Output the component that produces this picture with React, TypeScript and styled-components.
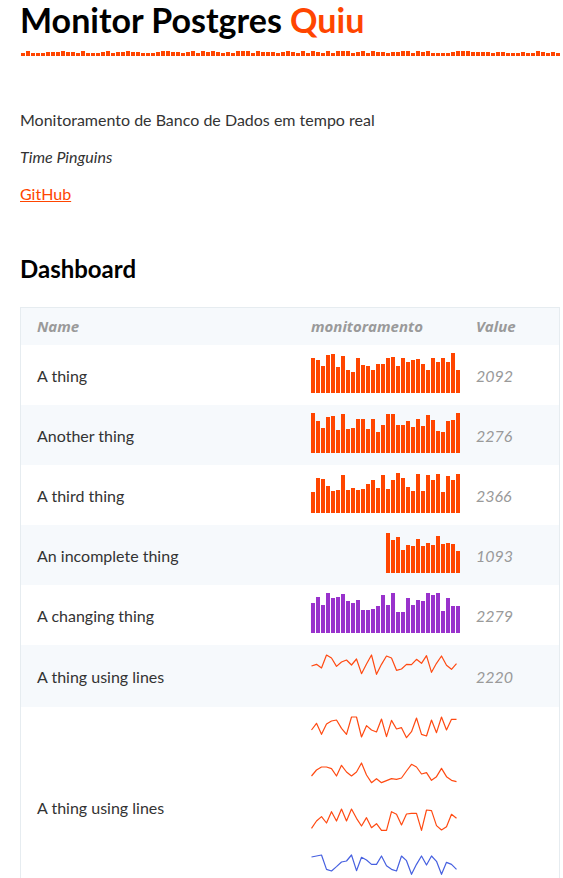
import React from "react";
import styled, { createGlobalStyle } from "styled-components";

const Global = createGlobalStyle`
  html, body { margin: 0; padding: 0; background: #ffffff; }
  body { font-family: Lato, "Open Sans", sans-serif; color: #333333; }
`;

const ORANGE = "#ff4500";

const Page = styled.div`
  width: 540px;
  padding: 0 0 40px 20px;
`;

const Header = styled.header`
  display: flex;
  flex-direction: column;
  gap: 10px;
  margin-bottom: 53px;
`;

const Title = styled.h1`
  margin: 0;
  font-size: 34px;
  line-height: 40px;
  font-weight: 700;
  color: #000000;
`;

const Accent = styled.span`
  color: ${ORANGE};
`;

const Para = styled.p<{ $italic?: boolean }>`
  margin: 0 0 16px;
  font-size: 16px;
  line-height: 21px;
  color: #333333;
  font-style: ${(p) => (p.$italic ? "italic" : "normal")};
`;

const Link = styled.a`
  color: ${ORANGE};
  text-decoration: underline;
`;

const SectionTitle = styled.h2`
  margin: 50px 0 23px;
  font-size: 24px;
  line-height: 30px;
  font-weight: 700;
  color: #000000;
`;

const Frame = styled.div`
  border: 1px solid #e6ecf0;
`;

const Table = styled.table`
  width: 100%;
  border-spacing: 0;
  table-layout: fixed;
`;

const Row = styled.tr<{ $striped?: boolean }>`
  background: ${(p) => (p.$striped ? "#f6f9fc" : "#ffffff")};
`;

const HeadCell = styled.th<{ $chart?: boolean }>`
  padding: ${(p) => (p.$chart ? "8px 0 8px 16px" : "8px 16px")};
  text-align: left;
  font-family: "Open Sans", Lato, sans-serif;
  font-size: 15px;
  line-height: 21px;
  font-weight: 700;
  font-style: italic;
  color: #9a9a9a;
  white-space: nowrap;
`;

const NameCell = styled.td`
  padding: 8px 16px;
  font-size: 16px;
  line-height: 21px;
  color: #333333;
  vertical-align: middle;
`;

const ChartCell = styled.td`
  padding: 8px 0 8px 16px;
  vertical-align: middle;
`;

const ValueCell = styled.td`
  padding: 8px 16px;
  font-size: 16px;
  line-height: 21px;
  font-style: italic;
  color: #9a9a9a;
  vertical-align: middle;
`;

const ChartStack = styled.div`
  display: flex;
  flex-direction: column;
`;

const BarsSvg = styled.svg`
  display: block;
  margin-bottom: 4px;
`;

const LineSvg = styled.svg`
  display: block;
  margin-bottom: 4px;
`;

const DashSvg = styled.svg`
  display: block;
`;

/* header sparkline */
const dashHeights: number[] = (() => {
  const start = [3, 5, 3, 3, 3, 4, 4, 4, 5, 4, 4, 3, 5, 3, 3, 3, 4, 5, 3, 4, 4, 5, 4, 4, 3, 3, 3, 4, 5, 5, 4, 4, 3, 4, 5, 3, 5];
  const out = [...start];
  let seed = 17;
  const choices = [3, 3, 4, 4, 5, 3];
  while (out.length < 108) {
    seed = (seed * 1103515245 + 12345) % 2147483648;
    out.push(choices[seed % choices.length]);
  }
  return out;
})();

const DashLine = () => (
  <DashSvg width={540} height={6} viewBox="0 0 540 6">
    {dashHeights.map((h, i) => (
      <rect key={i} x={i * 5 + 1} y={6 - h} width={4} height={h} fill={ORANGE} />
    ))}
  </DashSvg>
);

const Bars = ({ data, color }: { data: number[]; color: string }) => {
  const offset = 30 - data.length;
  return (
    <BarsSvg width={150} height={40} viewBox="0 0 150 40">
      {data.map((h, i) => (
        <rect key={i} x={(offset + i) * 5} y={40 - h} width={4} height={h} fill={color} />
      ))}
    </BarsSvg>
  );
};

const Line = ({ data, color }: { data: number[]; color: string }) => {
  const min = Math.min(...data);
  const pts = data.map((v, i) => `${i * 5 + 0.5},${(2 + (v - min) / 3).toFixed(2)}`).join(" ");
  return (
    <LineSvg width={150} height={42} viewBox="0 0 150 42">
      <polyline points={pts} fill="none" stroke={color} strokeWidth={1.2} strokeLinejoin="round" />
    </LineSvg>
  );
};

const barsA = [35, 33, 27, 38, 39, 26, 37, 23, 21, 35, 28, 27, 23, 29, 29, 35, 36, 27, 35, 31, 33, 34, 29, 23, 35, 31, 35, 31, 40, 23];
const barsB = [40, 32, 25, 36, 37, 23, 39, 24, 25, 34, 34, 24, 34, 21, 28, 39, 39, 28, 28, 32, 26, 34, 27, 38, 33, 22, 21, 32, 33, 40];
const barsC = [21, 35, 34, 27, 22, 23, 38, 23, 25, 23, 24, 29, 33, 25, 38, 24, 33, 40, 35, 26, 22, 39, 22, 38, 33, 39, 21, 37, 33, 39];
const barsD = [40, 33, 36, 23, 28, 27, 34, 27, 30, 28, 37, 29, 30, 29, 22];
const barsE = [30, 36, 28, 40, 35, 36, 39, 32, 30, 33, 23, 23, 24, 27, 38, 28, 40, 21, 21, 35, 28, 33, 32, 40, 38, 40, 22, 35, 27, 27];

const line1 = [78, 73, 84, 45, 54, 79, 66, 60, 75, 57, 101, 72, 45, 103, 73, 48, 54, 91, 87, 73, 74, 58, 70, 47, 97, 70, 48, 76, 88, 71];
const line2 = [270, 250, 283, 252, 243, 240, 265, 283, 231, 231, 291, 257, 270, 276, 237, 290, 241, 267, 263, 293, 275, 234, 283, 288, 240, 278, 231, 270, 238, 238];
const line3 = [408, 390, 381, 381, 386, 408, 376, 396, 408, 396, 369, 405, 428, 416, 428, 422, 416, 418, 414, 393, 373, 381, 402, 398, 421, 410, 385, 410, 421, 425];
const line4 = [565, 543, 530, 549, 515, 543, 507, 543, 507, 535, 558, 533, 563, 551, 571, 571, 515, 523, 555, 522, 520, 520, 571, 510, 512, 557, 570, 560, 523, 535];
const line5 = [651, 648, 645, 688, 693, 680, 666, 663, 645, 692, 652, 660, 673, 673, 648, 677, 688, 693, 648, 662, 703, 673, 648, 675, 648, 664, 703, 667, 673, 688];

const LINE_ORANGE = "#ff4a12";
const LINE_BLUE = "#4660e0";

export default function App() {
  return (
    <>
      <Global />
      <Page>
        <Header>
          <Title>
            Monitor Postgres <Accent>Quiu</Accent>
          </Title>
          <DashLine />
        </Header>
        <Para>Monitoramento de Banco de Dados em tempo real</Para>
        <Para $italic>Time Pinguins</Para>
        <Para>
          <Link href="#">GitHub</Link>
        </Para>
        <SectionTitle>Dashboard</SectionTitle>
        <Frame>
          <Table>
            <colgroup>
              <col style={{ width: 274 }} />
              <col style={{ width: 165 }} />
              <col />
            </colgroup>
            <thead>
              <Row $striped>
                <HeadCell>Name</HeadCell>
                <HeadCell $chart>monitoramento</HeadCell>
                <HeadCell>Value</HeadCell>
              </Row>
            </thead>
            <tbody>
              <Row>
                <NameCell>A thing</NameCell>
                <ChartCell><Bars data={barsA} color={ORANGE} /></ChartCell>
                <ValueCell>2092</ValueCell>
              </Row>
              <Row $striped>
                <NameCell>Another thing</NameCell>
                <ChartCell><Bars data={barsB} color={ORANGE} /></ChartCell>
                <ValueCell>2276</ValueCell>
              </Row>
              <Row>
                <NameCell>A third thing</NameCell>
                <ChartCell><Bars data={barsC} color={ORANGE} /></ChartCell>
                <ValueCell>2366</ValueCell>
              </Row>
              <Row $striped>
                <NameCell>An incomplete thing</NameCell>
                <ChartCell><Bars data={barsD} color={ORANGE} /></ChartCell>
                <ValueCell>1093</ValueCell>
              </Row>
              <Row>
                <NameCell>A changing thing</NameCell>
                <ChartCell><Bars data={barsE} color="#9932cc" /></ChartCell>
                <ValueCell>2279</ValueCell>
              </Row>
              <Row $striped>
                <NameCell>A thing using lines</NameCell>
                <ChartCell><Line data={line1} color={LINE_ORANGE} /></ChartCell>
                <ValueCell>2220</ValueCell>
              </Row>
              <Row>
                <NameCell>A thing using lines</NameCell>
                <ChartCell>
                  <ChartStack>
                    <Line data={line2} color={LINE_ORANGE} />
                    <Line data={line3} color={LINE_ORANGE} />
                    <Line data={line4} color={LINE_ORANGE} />
                    <Line data={line5} color={LINE_BLUE} />
                  </ChartStack>
                </ChartCell>
                <ValueCell />
              </Row>
            </tbody>
          </Table>
        </Frame>
      </Page>
    </>
  );
}
